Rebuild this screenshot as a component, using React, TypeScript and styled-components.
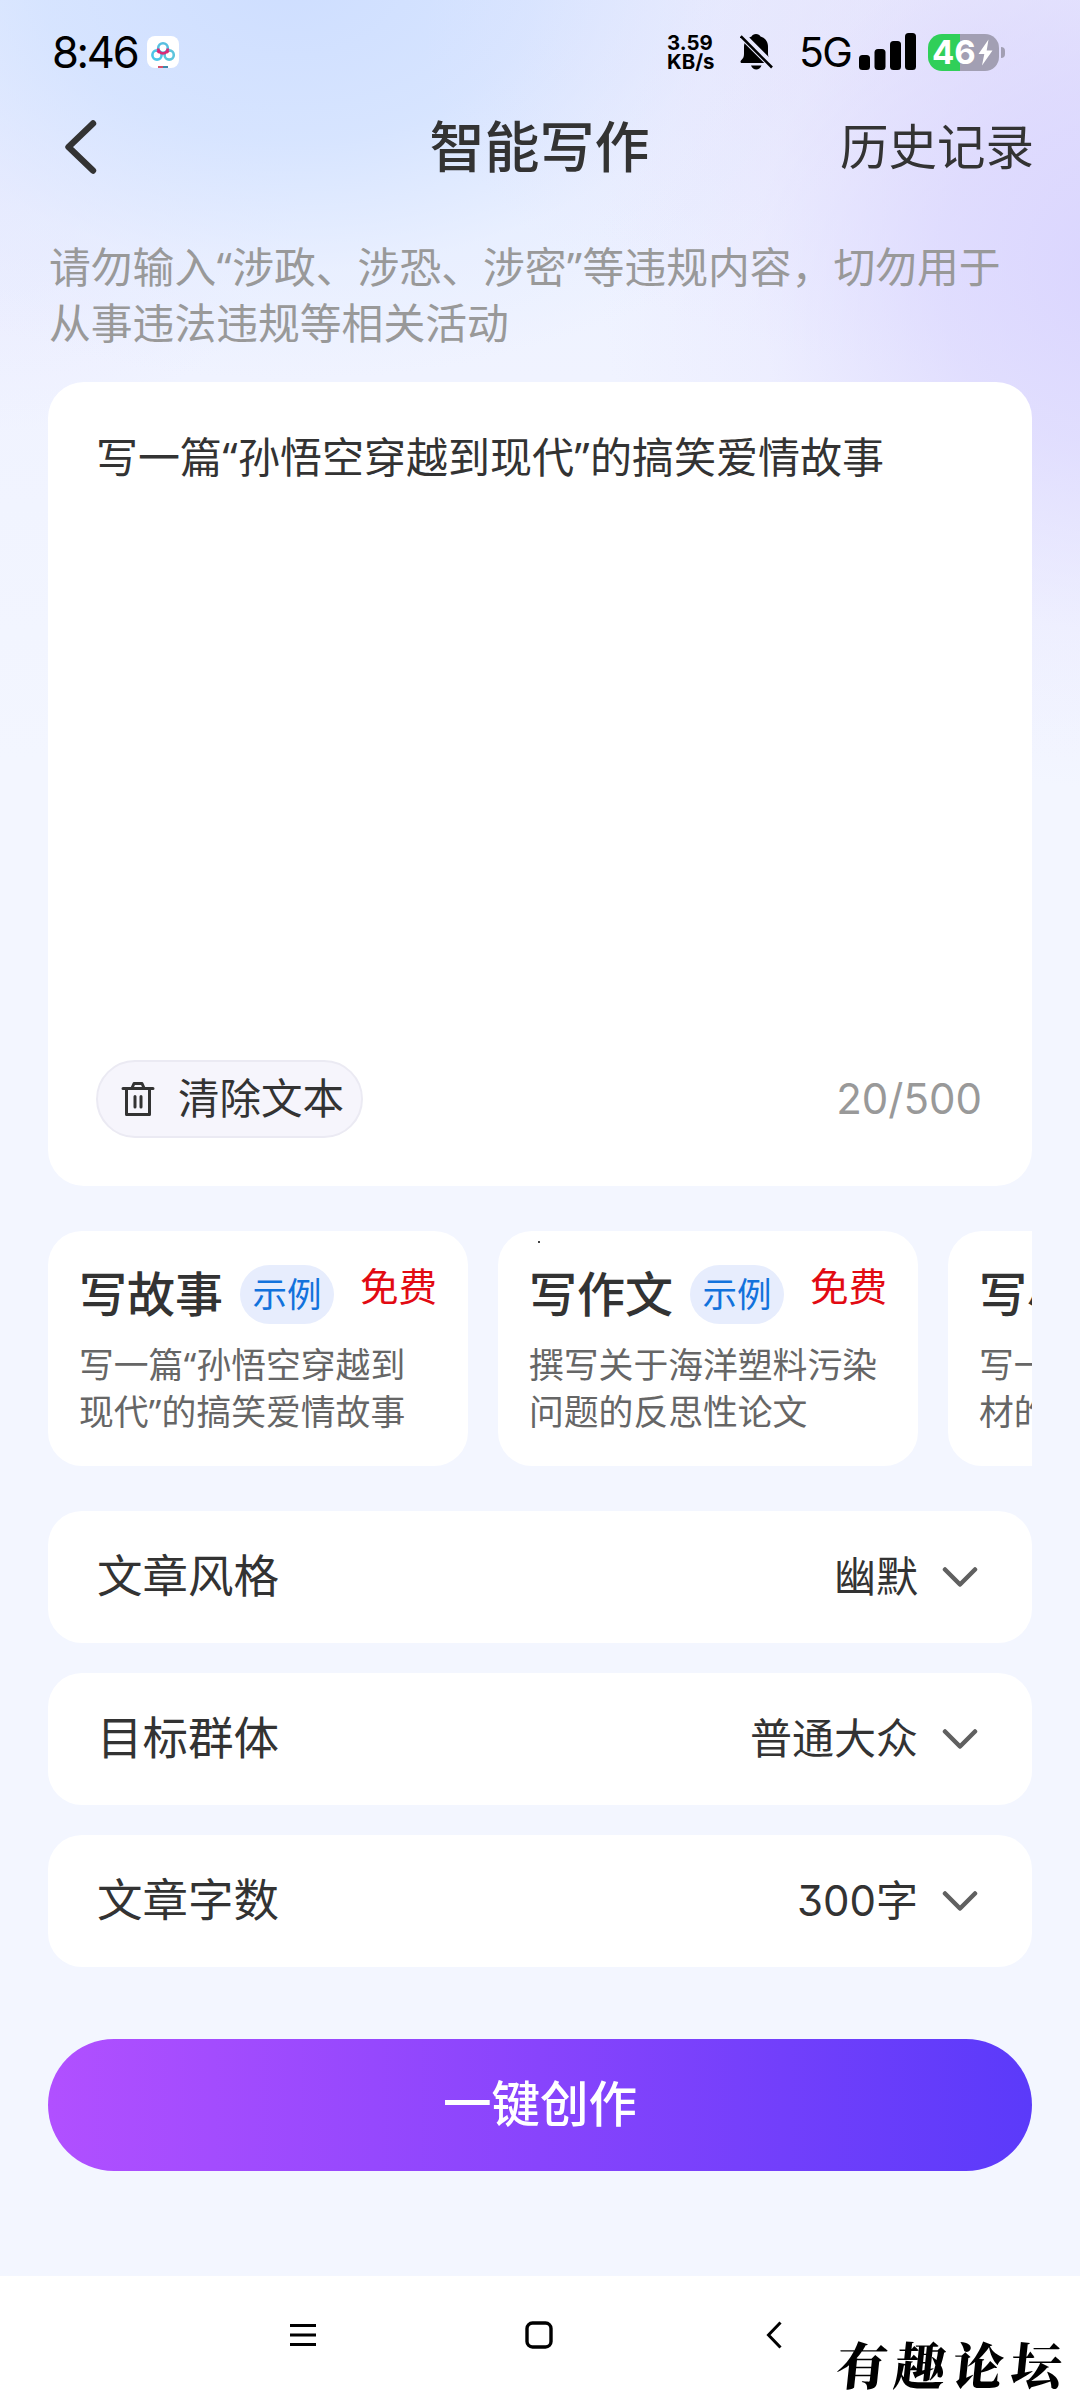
import React from "react";
import styled, { createGlobalStyle } from "styled-components";

const GlobalStyle = createGlobalStyle`
  * { box-sizing: border-box; }
  body {
    margin: 0;
    font-family: Inter, "Noto Sans CJK SC", "Noto Sans", sans-serif;
    color: #333;
  }
  button { font: inherit; color: inherit; border: 0; background: none; padding: 0; }
  svg { display: block; flex: none; }
`;

const Page = styled.div`
  width: 1080px;
  height: 2400px;
  overflow: hidden;
  display: flex;
  flex-direction: column;
  background:
    radial-gradient(ellipse 520px 520px at 1120px 270px, rgba(216, 210, 254, 0.9) 0%, rgba(219, 214, 254, 0.72) 35%, rgba(230, 227, 254, 0.32) 70%, rgba(240, 240, 254, 0) 100%),
    radial-gradient(ellipse 560px 330px at 980px 40px, rgba(226, 221, 250, 0.7) 0%, rgba(232, 228, 252, 0.4) 50%, rgba(240, 240, 254, 0) 100%),
    radial-gradient(ellipse 620px 400px at 290px -20px, rgba(206, 222, 255, 1) 0%, rgba(211, 226, 255, 0.85) 40%, rgba(226, 235, 255, 0.45) 72%, rgba(243, 246, 255, 0) 100%),
    radial-gradient(ellipse 300px 240px at 0px 190px, rgba(232, 231, 254, 0.7) 0%, rgba(243, 246, 255, 0) 100%),
    linear-gradient(180deg, #eaf1ff 0px, #f0f3ff 380px, #f3f6ff 760px, #f3f6ff 100%);
`;

const StatusBar = styled.header`
  height: 104px;
  padding: 0 75px 0 52px;
  display: flex;
  align-items: center;
  color: #000;
`;

const Clock = styled.span`
  width: 95px;
  font-size: 43.5px;
  line-height: 52px;
  letter-spacing: -2.3px;
`;

const Spacer = styled.div`
  flex: 1;
`;

const NetSpeed = styled.div`
  width: 73px;
  font-size: 20.4px;
  font-weight: 700;
`;

const SpeedLine = styled.span`
  display: block;
  height: 19px;
  line-height: 19px;
`;

const Network = styled.span`
  margin-left: 26px;
  width: 60px;
  font-size: 41px;
  line-height: 52px;
  letter-spacing: -1.6px;
`;

const Battery = styled.div`
  width: 71px;
  height: 37px;
  margin-left: 11px;
  padding-left: 4px;
  border-radius: 14px;
  background: linear-gradient(90deg, #30cf59 0 32px, #a29fb3 32px);
  display: flex;
  align-items: center;
  color: #fff;
  font-size: 33px;
  font-weight: 700;
  line-height: 37px;
`;

const BatteryLevel = styled.span`
  width: 46px;
`;

const BatteryTip = styled.span`
  width: 4px;
  height: 11px;
  margin-left: 2px;
  border-radius: 0 4px 4px 0;
  background: #a29fb3;
`;

const TitleBar = styled.div`
  height: 86px;
  padding: 0 46px 0 64px;
  display: grid;
  grid-template-columns: 200px 1fr 200px;
  align-items: center;
`;

const Title = styled.h1`
  margin: 0 0 0 -19px;
  text-align: center;
  font-size: 55px;
  font-weight: 500;
  line-height: 70px;
`;

const HistoryLink = styled.button`
  justify-self: end;
  padding-top: 2px;
  font-size: 48.5px;
  line-height: 60px;
  white-space: nowrap;
`;

const Content = styled.main`
  flex: 1;
  padding: 50px 48px 0;
  display: flex;
  flex-direction: column;
`;

const Notice = styled.p`
  margin: 0;
  padding-left: 1px;
  font-size: 41.8px;
  line-height: 56px;
  color: #999;
  white-space: nowrap;
`;

const Quote = styled.span<{ $w: number }>`
  display: inline-block;
  width: ${(p) => p.$w}px;
  font-family: "Noto Sans", sans-serif;
  line-height: 1;
  text-align: center;
`;

const Editor = styled.section`
  height: 804px;
  margin-top: 30px;
  padding: 46px 50px 48px 48px;
  border-radius: 36px;
  background: #fff;
  display: flex;
  flex-direction: column;
  justify-content: space-between;
`;

const Prompt = styled.p`
  margin: 0;
  font-size: 42px;
  line-height: 60px;
  white-space: nowrap;
`;

const EditorFooter = styled.div`
  display: flex;
  align-items: center;
  justify-content: space-between;
`;

const ClearButton = styled.button`
  width: 267px;
  height: 78px;
  padding-left: 23px;
  border: 2px solid #ebeaf3;
  border-radius: 39px;
  background: #f6f5fc;
  display: flex;
  align-items: center;
  gap: 23px;
  font-size: 41.5px;
  line-height: 60px;
  white-space: nowrap;
`;

const Counter = styled.span`
  font-size: 42px;
  line-height: 60px;
  color: #999;
`;

const Examples = styled.section`
  height: 235px;
  margin-top: 45px;
  display: flex;
  gap: 30px;
  overflow: hidden;
`;

const ExampleCard = styled.article`
  position: relative;
  flex: 0 0 420px;
  min-width: 0;
  padding: 34px 30px 0 31px;
  border-radius: 34px;
  background: #fff;
`;

const ExampleHead = styled.div`
  height: 59px;
  display: flex;
  align-items: center;
`;

const ExampleTitle = styled.h2`
  margin: 0;
  width: 161px;
  flex: none;
  font-size: 48px;
  font-weight: 500;
  line-height: 59px;
  white-space: nowrap;
`;

const SampleTag = styled.span`
  flex: none;
  width: 94px;
  height: 59px;
  border-radius: 30px;
  background: #e7edfd;
  color: #1272dc;
  font-size: 34.5px;
  line-height: 60px;
  text-align: center;
`;

const FreeTag = styled.span`
  margin: 0 0 15px 26px;
  color: #e20a12;
  font-size: 38.6px;
  line-height: 44px;
  white-space: nowrap;
`;

const ExampleText = styled.p`
  margin: 18px 0 0;
  font-size: 34.8px;
  line-height: 47px;
  color: #666;
  white-space: nowrap;
`;

const Speck = styled.i`
  position: absolute;
  left: 40px;
  top: 10px;
  width: 2px;
  height: 2px;
  background: #444;
`;

const Options = styled.section`
  margin-top: 45px;
  display: flex;
  flex-direction: column;
  gap: 30px;
`;

const OptionRow = styled.div`
  height: 132px;
  padding: 0 54px 0 49px;
  border-radius: 34px;
  background: #fff;
  display: flex;
  align-items: center;
  justify-content: space-between;
`;

const OptionLabel = styled.span`
  font-size: 45.5px;
  line-height: 60px;
`;

const OptionValue = styled.span`
  display: flex;
  align-items: center;
  gap: 24px;
  font-size: 42px;
  line-height: 60px;
  font-feature-settings: "cv09" 1;
`;

const CreateButton = styled.button`
  height: 132px;
  margin-top: 72px;
  border-radius: 66px;
  background: linear-gradient(90deg, #b150ff 0%, #8844fc 50%, #5b3afa 100%);
  color: #fff;
  font-size: 48.5px;
  font-weight: 500;
  line-height: 132px;
`;

const NavBar = styled.nav`
  height: 124px;
  padding: 0 20px 0 290px;
  background: #fff;
  display: flex;
  align-items: flex-start;
`;

const NavIcon = styled.svg<{ $gap: number }>`
  margin: 45px ${(p) => p.$gap}px 0 0;
`;

const Watermark = styled.span`
  margin-top: 54px;
  color: #000;
  font-family: "Noto Serif CJK SC", "Noto Sans CJK SC", serif;
  font-size: 51px;
  font-weight: 900;
  line-height: 66px;
  letter-spacing: 7px;
  white-space: nowrap;
  transform: skewX(-6deg);
`;

const CloudAppIcon = () => (
  <svg width="32" height="32" viewBox="0 0 32 32" fill="none">
    <rect width="32" height="32" rx="8" fill="#fff" />
    <circle cx="10" cy="19" r="4.6" stroke="#4cc6e8" strokeWidth="2.6" />
    <circle cx="22.2" cy="19" r="4.6" stroke="#5cc4dc" strokeWidth="2.6" />
    <circle cx="16" cy="12" r="4.8" stroke="#58bfe0" strokeWidth="2.6" />
    <path d="M11.2 12.6a4.8 4.8 0 0 0 9.6 0M11.5 15.4l-1.2 1M20.5 15.4l1.2 1M16 17v1.4" stroke="#d92b78" strokeWidth="2.8" />
    <path d="M11 31h5" stroke="#d8506a" strokeWidth="2" />
    <path d="M16 31h5" stroke="#3d87a8" strokeWidth="2" />
  </svg>
);

const MutedBellIcon = () => (
  <svg width="33" height="36" viewBox="0 0 33 36">
    <defs>
      <mask id="bell-slash">
        <rect width="33" height="36" fill="#fff" />
        <path d="M-3 -3.500L36 35.500" stroke="#000" strokeWidth="7.500" />
      </mask>
    </defs>
    <g mask="url(#bell-slash)">
      <path d="M16 0c2.200 0 3.800 1 4.500 2.500 5 1.500 7.500 5.600 7.500 10.500v7c0 3 1.200 4.500 3 6.500.8 1 .5 2.500-1 2.500H2c-1.500 0-1.900-1.500-1-2.500 2-2 3-3.500 3-6.500v-7C4 8 7 4 11.500 2.500 12.200 1 13.800 0 16 0z" />
    </g>
    <path d="M11 31.500h10.500c-1 2.500-3 4-5.250 4S12 34 11 31.500z" />
    <path d="M0.800 2.200L32 33.500" stroke="#000" strokeWidth="2.600" />
  </svg>
);

const SignalIcon = () => (
  <svg width="58" height="38" viewBox="0 0 58 38">
    <rect x="0" y="22" width="11" height="15" rx="3.500" />
    <rect x="15.500" y="16" width="11" height="21" rx="3.500" />
    <rect x="31" y="8" width="11" height="29" rx="3.500" />
    <rect x="46" y="0" width="11" height="37" rx="3.500" />
  </svg>
);

const BoltIcon = () => (
  <svg width="15" height="27" viewBox="0 0 15 27" fill="#fff">
    <path d="M10.500 0.500L0.500 15h5.800L4 26.500 14.500 11.500H8.700z" />
  </svg>
);

const BackIcon = () => (
  <svg width="34" height="56" viewBox="0 0 34 56" fill="none">
    <path d="M29 4.500L4.500 28L29 51.500" stroke="#333" strokeWidth="6.400" strokeLinecap="round" strokeLinejoin="round" />
  </svg>
);

const TrashIcon = () => (
  <svg width="34" height="36" viewBox="0 0 34 36" fill="none" stroke="#333" strokeWidth="3" strokeLinecap="round" strokeLinejoin="round">
    <path d="M2 7.500h30M11 7L13 2.500h8L23 7M5.500 8v25.500h23V8M14 15.500v10.500M20 15.500v10.500" />
  </svg>
);

const ChevronIcon = () => (
  <svg width="36" height="24" viewBox="0 0 36 24" fill="none">
    <path d="M3 4.500L18 19.500L33 4.500" stroke="#606060" strokeWidth="4.500" strokeLinecap="round" strokeLinejoin="round" />
  </svg>
);

const examples = [
  { title: "写故事", lines: [<>写一篇<Quote $w={13}>“</Quote>孙悟空穿越到</>, <>现代<Quote $w={13}>”</Quote>的搞笑爱情故事</>] },
  { title: "写作文", lines: ["撰写关于海洋塑料污染", "问题的反思性论文"], speck: true },
  { title: "写小说", lines: ["写一篇", "材的小说"] },
];

const options = [
  { label: "文章风格", value: "幽默" },
  { label: "目标群体", value: "普通大众" },
  { label: "文章字数", value: "300字" },
];

export default function App() {
  return (
    <Page>
      <GlobalStyle />
      <StatusBar>
        <Clock>8:46</Clock>
        <CloudAppIcon />
        <Spacer />
        <NetSpeed>
          <SpeedLine>3.59</SpeedLine>
          <SpeedLine>KB/s</SpeedLine>
        </NetSpeed>
        <MutedBellIcon />
        <Network>5G</Network>
        <SignalIcon />
        <Battery>
          <BatteryLevel>46</BatteryLevel>
          <BoltIcon />
        </Battery>
        <BatteryTip />
      </StatusBar>
      <TitleBar>
        <BackIcon />
        <Title>智能写作</Title>
        <HistoryLink>历史记录</HistoryLink>
      </TitleBar>
      <Content>
        <Notice>
          请勿输入<Quote $w={16}>“</Quote>涉政、涉恐、涉密<Quote $w={16}>”</Quote>等违规内容，切勿用于
          <br />
          从事违法违规等相关活动
        </Notice>
        <Editor>
          <Prompt>
            写一篇<Quote $w={16}>“</Quote>孙悟空穿越到现代<Quote $w={16}>”</Quote>的搞笑爱情故事
          </Prompt>
          <EditorFooter>
            <ClearButton>
              <TrashIcon />
              清除文本
            </ClearButton>
            <Counter>20/500</Counter>
          </EditorFooter>
        </Editor>
        <Examples>
          {examples.map((item) => (
            <ExampleCard key={item.title}>
              {item.speck && <Speck />}
              <ExampleHead>
                <ExampleTitle>{item.title}</ExampleTitle>
                <SampleTag>示例</SampleTag>
                <FreeTag>免费</FreeTag>
              </ExampleHead>
              <ExampleText>
                {item.lines[0]}
                <br />
                {item.lines[1]}
              </ExampleText>
            </ExampleCard>
          ))}
        </Examples>
        <Options>
          {options.map((item) => (
            <OptionRow key={item.label}>
              <OptionLabel>{item.label}</OptionLabel>
              <OptionValue>
                {item.value}
                <ChevronIcon />
              </OptionValue>
            </OptionRow>
          ))}
        </Options>
        <CreateButton>一键创作</CreateButton>
      </Content>
      <NavBar>
        <NavIcon $gap={208} width="27" height="28" viewBox="0 0 27 28" stroke="#000" strokeWidth="3">
          <path d="M0 4.500h26M0 14h26M0 23.500h26" />
        </NavIcon>
        <NavIcon $gap={213} width="28" height="28" viewBox="0 0 28 28" fill="none" stroke="#000" strokeWidth="3.400">
          <rect x="2" y="2" width="24" height="24" rx="5.500" />
        </NavIcon>
        <NavIcon $gap={54} width="17" height="28" viewBox="0 0 17 28" fill="none" stroke="#000" strokeWidth="3">
          <path d="M14.500 1.500L2.500 14L14.500 26.500" />
        </NavIcon>
        <Watermark>有趣论坛</Watermark>
      </NavBar>
    </Page>
  );
}
